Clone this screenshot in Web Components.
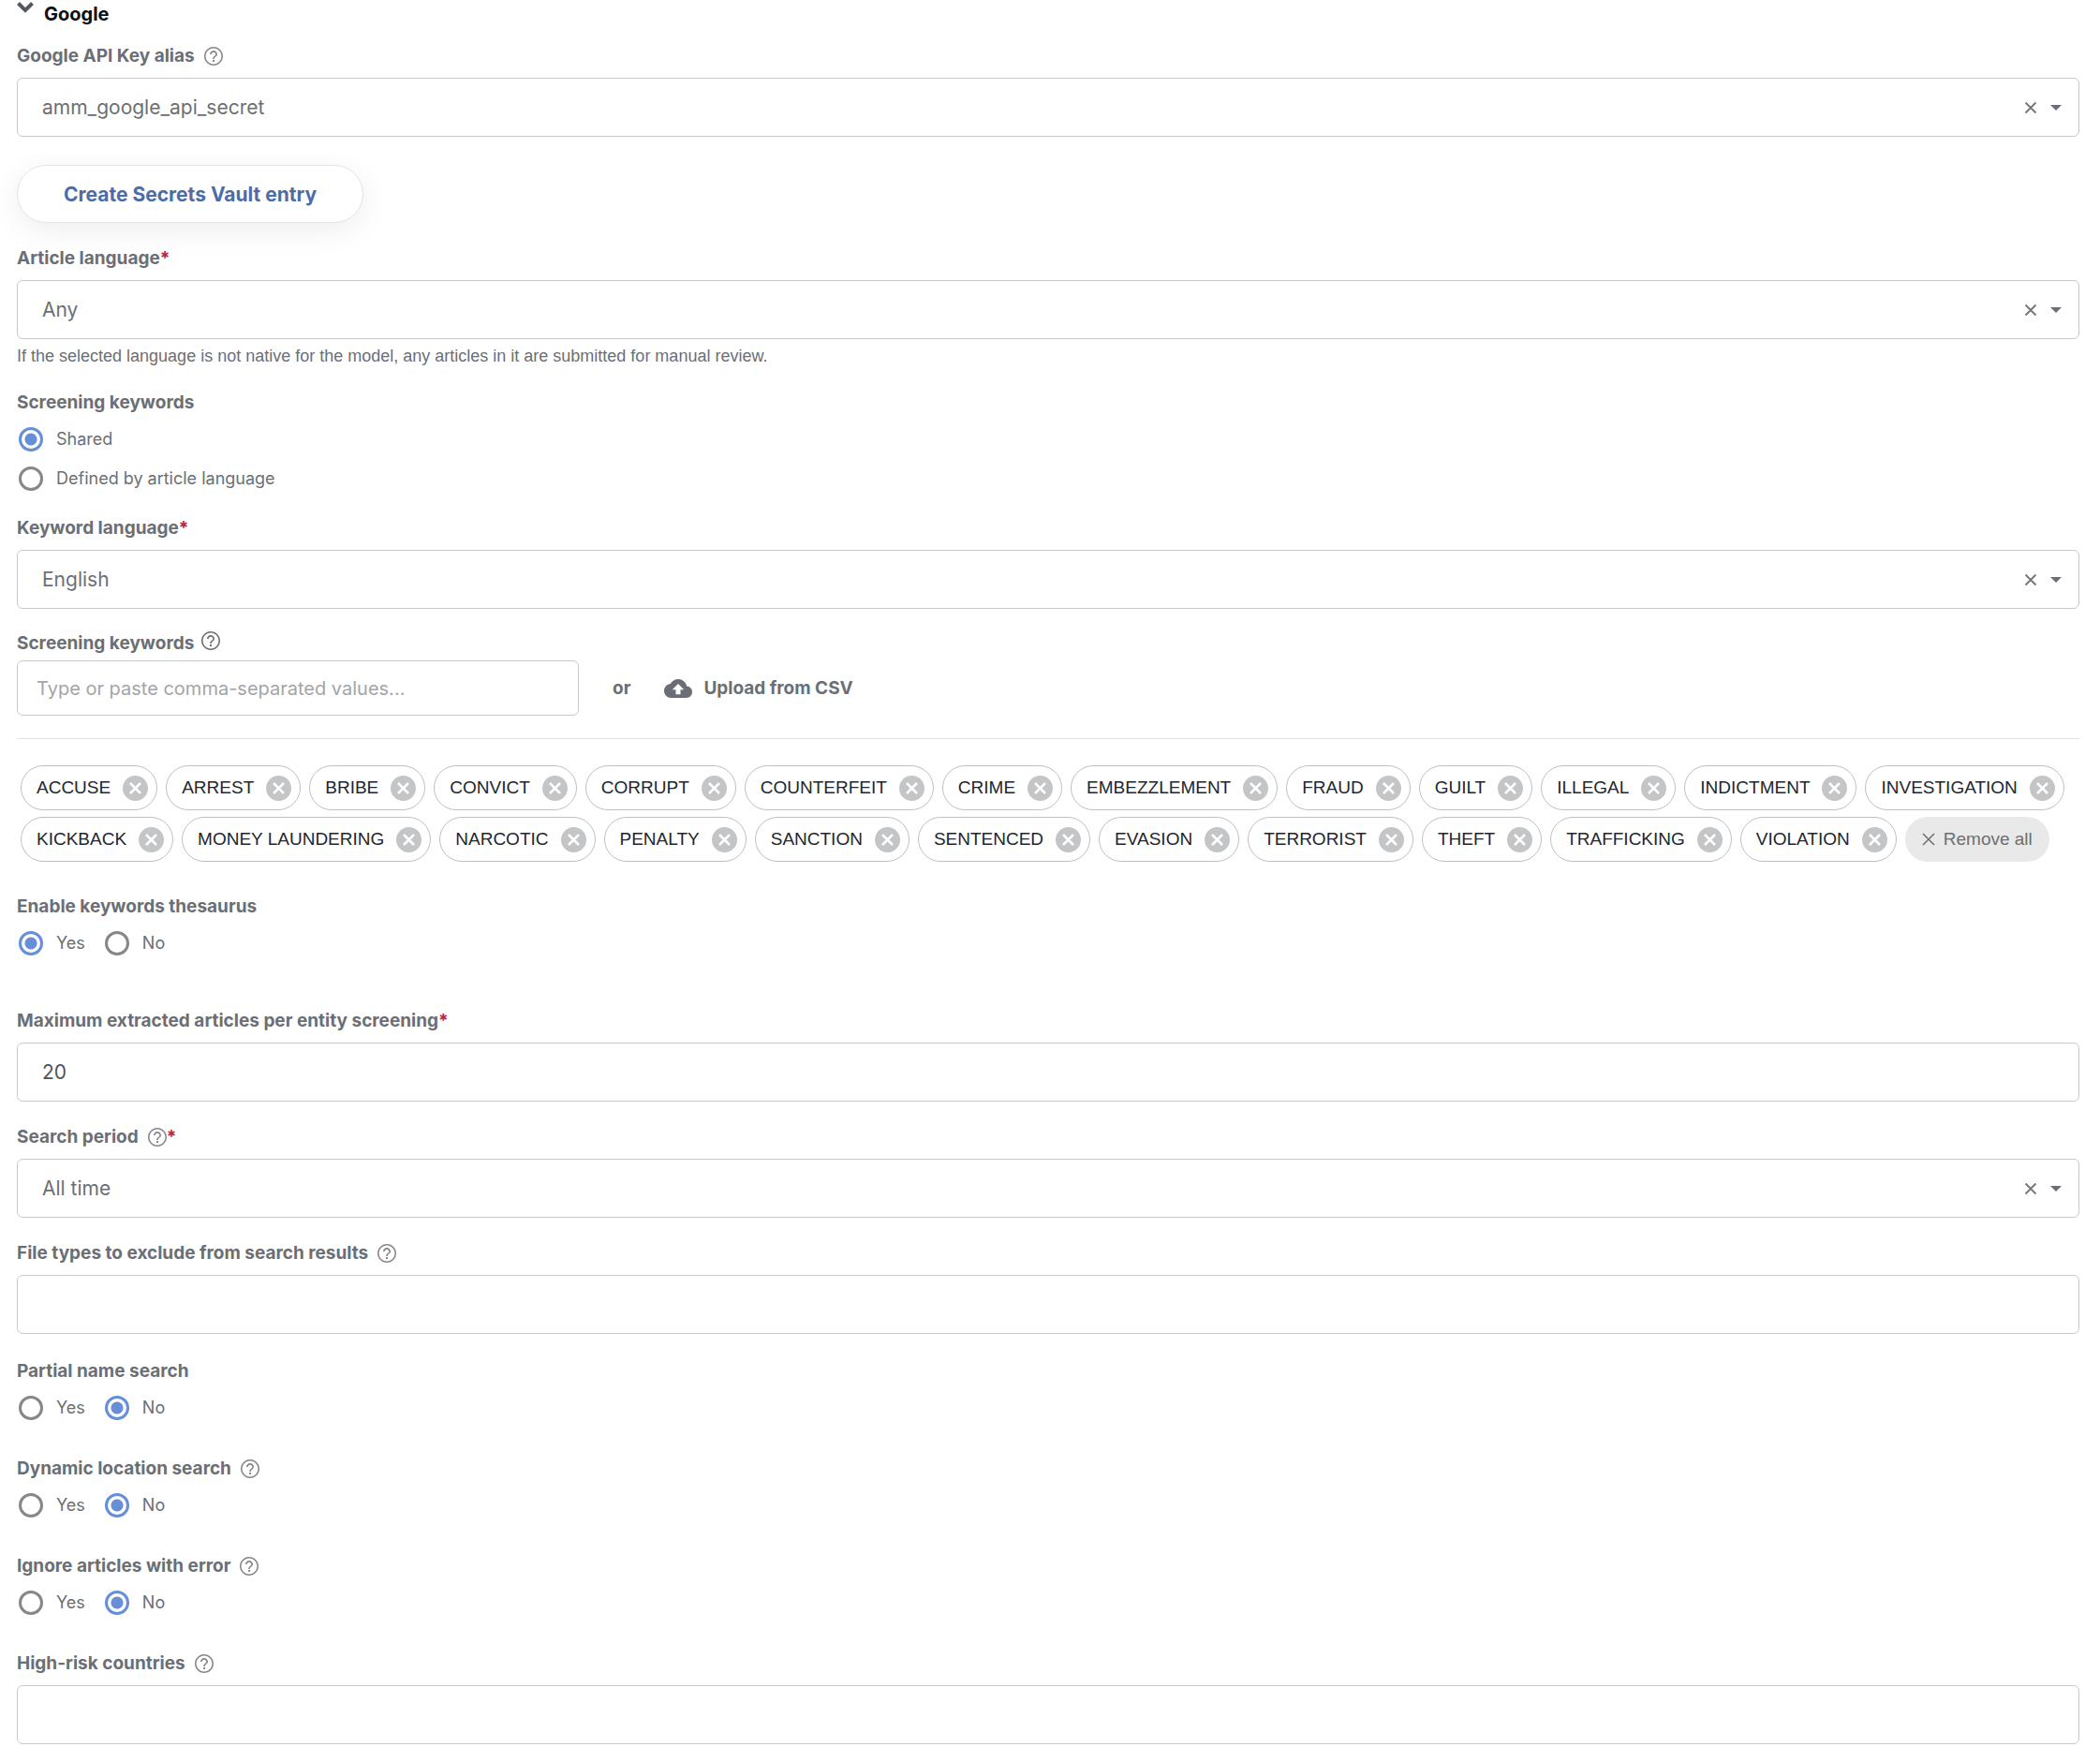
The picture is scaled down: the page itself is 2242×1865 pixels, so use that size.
<!DOCTYPE html>
<html lang="en">
<head>
<meta charset="utf-8">
<meta name="viewport" content="width=device-width, initial-scale=1">
<title>Google</title>
<style>
  body {
    margin: 0;
    background: #fff;
    color: #6b6f75;
    font-family: Inter, "Liberation Sans", sans-serif;
    font-size: 18px;
    line-height: 24px;
  }
</style>
</head>
<body>
<google-settings></google-settings>

<script>
const baseStyles = /*html*/ `
  <style>
    :host { display: block; }
    * { box-sizing: border-box; }
    button, input, select { font-family: inherit; color: inherit; margin: 0; }
    button { border: 0; padding: 0; background: none; cursor: pointer; }
    svg { display: block; }
    .label {
      display: flex;
      align-items: center;
      height: 24px;
      margin-bottom: 11px;
      font-size: 19px;
      font-weight: 700;
      white-space: nowrap;
    }
    .label help-icon { margin-left: 10px; }
    .required { color: #b9253a; }
    .box {
      display: flex;
      align-items: center;
      width: 100%;
      height: 63px;
      border: 1px solid #c8c9cb;
      border-radius: 6px;
      background: #fff;
    }
    .box:focus-within { border-color: #668fd8; }
  </style>
`;

// label + help icon + red star, shared by all the fields
const labelContent = (el) => `
  <span>${el.getAttribute('label')}</span>
  ${el.hasAttribute('help') ? '<help-icon></help-icon>' : ''}
  ${el.hasAttribute('required') ? '<span class="required">*</span>' : ''}
`;

class HelpIcon extends HTMLElement {
  constructor() {
    super();
    this.attachShadow({ mode: 'open' });
    this.shadowRoot.innerHTML = /*html*/ `
      <style>
        :host { display: block; color: #85878b; }
        svg { display: block; }
      </style>
      <svg width="20" height="20" viewBox="2 2 20 20" fill="currentColor" aria-hidden="true">
        <path d="M11 18h2v-2h-2v2zm1-16C6.480 2 2 6.480 2 12s4.480 10 10 10 10-4.480 10-10S17.520 2 12 2zm0 18.400c-4.630 0-8.400-3.770-8.400-8.400S7.370 3.600 12 3.600s8.400 3.770 8.400 8.400-3.770 8.400-8.400 8.400zm0-14.400c-2.210 0-4 1.790-4 4h1.700c0-1.270 1.030-2.300 2.300-2.300s2.300 1.030 2.300 2.300c0 2-3.150 1.750-3.150 5h1.700c0-2.250 3.150-2.500 3.150-5 0-2.210-1.790-4-4-4z"/>
      </svg>
    `;
  }
}
customElements.define('help-icon', HelpIcon);

class TextField extends HTMLElement {
  connectedCallback() {
    this.attachShadow({ mode: 'open' });
    this.shadowRoot.innerHTML = /*html*/ `
      ${baseStyles}
      <style>
        input {
          padding: 0 26px;
          font-size: 21px;
          color: #505359;
          outline: none;
        }
      </style>
      <label class="label" for="control">${labelContent(this)}</label>
      <input class="box" id="control" type="text" value="${this.getAttribute('value') || ''}">
    `;
  }
}
customElements.define('text-field', TextField);

class SelectField extends HTMLElement {
  connectedCallback() {
    const value = this.getAttribute('value');
    this.attachShadow({ mode: 'open' });
    this.shadowRoot.innerHTML = /*html*/ `
      ${baseStyles}
      <style>
        .box { padding-right: 18px; }
        select {
          flex: 1;
          height: 100%;
          padding: 0 26px;
          border: 0;
          background: none;
          appearance: none;
          font-size: 21px;
          outline: none;
        }
        .clear { padding: 4px; margin-right: 10px; }
        .note {
          margin: 6px 0 0;
          font-family: "Liberation Sans", Arial, sans-serif;
          font-size: 18px;
        }
      </style>
      <label class="label" for="control">${labelContent(this)}</label>
      <div class="box">
        <select id="control"><option value="">&nbsp;</option><option selected>${value}</option></select>
        <button class="clear" type="button" aria-label="Clear">
          <svg width="14" height="14" viewBox="0 0 14 14" fill="none" stroke="#77797d" stroke-width="2"><path d="M1.500 1.500l11 11M12.500 1.500l-11 11"/></svg>
        </button>
        <svg width="12" height="6" viewBox="0 0 12 6" fill="#6b6f75" aria-hidden="true"><path d="M0 0h12L6 6z"/></svg>
      </div>
      ${this.hasAttribute('note') ? `<p class="note">${this.getAttribute('note')}</p>` : ''}
    `;
    this.shadowRoot.querySelector('.clear').addEventListener('click', () => {
      this.shadowRoot.querySelector('select').value = '';
    });
  }
}
customElements.define('select-field', SelectField);

class RadioField extends HTMLElement {
  connectedCallback() {
    const checked = this.getAttribute('value');
    const options = this.getAttribute('options').split(',');
    this.attachShadow({ mode: 'open' });
    this.shadowRoot.innerHTML = /*html*/ `
      ${baseStyles}
      <style>
        .label { margin-bottom: 14px; }
        .options { display: flex; gap: 21px; margin-left: 2px; }
        :host([stacked]) .options { flex-direction: column; gap: 16px; }
        .option { display: flex; align-items: center; gap: 14px; height: 26px; }
        input {
          appearance: none;
          width: 26px;
          height: 26px;
          border: 3px solid #85878b;
          border-radius: 50%;
        }
        input:checked {
          border-color: #668fd8;
          background: radial-gradient(circle, #668fd8 6px, #fff 7px);
        }
      </style>
      <div class="label" id="title">${labelContent(this)}</div>
      <div class="options" role="radiogroup" aria-labelledby="title">
        ${options.map((option) => `
          <label class="option">
            <input type="radio" name="choice" ${option === checked ? 'checked' : ''}>
            <span>${option}</span>
          </label>
        `).join('')}
      </div>
    `;
  }
}
customElements.define('radio-field', RadioField);

class KeywordChip extends HTMLElement {
  constructor() {
    super();
    this.attachShadow({ mode: 'open' });
    this.shadowRoot.innerHTML = /*html*/ `
      <style>
        :host {
          box-sizing: border-box;
          display: flex;
          align-items: center;
          gap: 13px;
          height: 48px;
          padding: 0 9px 0 16px;
          border: 1px solid #bfc0c3;
          border-radius: 24px;
          color: #22262e;
          white-space: nowrap;
        }
        button { border: 0; padding: 0; background: none; cursor: pointer; }
        svg { display: block; }
      </style>
      <slot></slot>
      <button type="button" aria-label="Remove">
        <svg width="27" height="27" viewBox="0 0 27 27"><circle cx="13.500" cy="13.500" r="13.500" fill="#c4c5c7"/><path d="M8 8l11 11M19 8L8 19" stroke="#fff" stroke-width="2.500"/></svg>
      </button>
    `;
    this.shadowRoot.querySelector('button').addEventListener('click', () => this.remove());
  }
}
customElements.define('keyword-chip', KeywordChip);

class KeywordEditor extends HTMLElement {
  connectedCallback() {
    const keywords = this.getAttribute('keywords').split(',');
    this.attachShadow({ mode: 'open' });
    this.shadowRoot.innerHTML = /*html*/ `
      ${baseStyles}
      <style>
        .label { align-items: flex-start; margin-bottom: 7px; line-height: 26px; }
        .label help-icon { margin-left: 8px; color: #6b6f75; }
        .entry {
          display: flex;
          align-items: center;
          padding-bottom: 24px;
          border-bottom: 1px solid #dfe0e1;
          font-size: 19px;
          font-weight: 700;
        }
        input.box { width: 600px; height: 59px; padding: 0 20px; font-size: 20px; outline: none; }
        input::placeholder { color: #a3a5a8; opacity: 1; }
        .or { margin: 0 36px; }
        .upload { display: flex; align-items: center; gap: 12px; font-size: 19px; font-weight: 700; }
        .chips {
          display: flex;
          flex-wrap: wrap;
          gap: 7px 9px;
          padding: 28px 4px 0;
          font-family: "Liberation Sans", Arial, sans-serif;
          font-size: 19px;
        }
        .remove {
          display: flex;
          align-items: center;
          gap: 9px;
          height: 48px;
          padding: 0 18px;
          border-radius: 24px;
          background: #e9e9ea;
          font-size: 19px;
        }
      </style>
      <label class="label" for="control">${labelContent(this)}</label>
      <div class="entry">
        <input class="box" id="control" type="text" placeholder="Type or paste comma-separated values...">
        <span class="or">or</span>
        <button class="upload" type="button">
          <svg width="30" height="20" viewBox="0 4 24 16" fill="#6b6f75" aria-hidden="true"><path d="M19.350 10.040C18.670 6.590 15.640 4 12 4 9.110 4 6.600 5.640 5.350 8.040 2.340 8.360 0 10.910 0 14c0 3.310 2.690 6 6 6h13c2.760 0 5-2.240 5-5 0-2.640-2.050-4.780-4.650-4.960zM14 13v4h-4v-4H7l5-5 5 5h-3z"/></svg>
          Upload from CSV
        </button>
      </div>
      <div class="chips">
        ${keywords.map((word) => `<keyword-chip>${word}</keyword-chip>`).join('')}
        <button class="remove" type="button">
          <svg width="14" height="14" viewBox="0 0 14 14" fill="none" stroke="#6b6f75" stroke-width="1.500"><path d="M1 1l12 12M13 1L1 13"/></svg>
          Remove all
        </button>
      </div>
    `;
    this.shadowRoot.querySelector('.remove').addEventListener('click', () => {
      this.shadowRoot.querySelectorAll('keyword-chip').forEach((chip) => chip.remove());
    });
  }
}
customElements.define('keyword-editor', KeywordEditor);

class PillButton extends HTMLElement {
  constructor() {
    super();
    this.attachShadow({ mode: 'open' });
    this.shadowRoot.innerHTML = /*html*/ `
      <style>
        :host { display: flex; }
        button {
          height: 62px;
          padding: 0 49px;
          border: 1px solid #e3e4e6;
          border-radius: 31px;
          background: #fff;
          box-shadow: 0 8px 32px rgba(0, 0, 0, 0.07);
          color: #4a6da9;
          font-family: inherit;
          font-size: 21px;
          font-weight: 700;
          cursor: pointer;
        }
      </style>
      <button type="button"><slot></slot></button>
    `;
  }
}
customElements.define('pill-button', PillButton);

class GoogleSettings extends HTMLElement {
  constructor() {
    super();
    this.attachShadow({ mode: 'open' });
    this.shadowRoot.innerHTML = /*html*/ `
      <style>
        :host { display: block; padding: 0 22px 2px 18px; }
        h2 {
          display: flex;
          gap: 11px;
          margin: 0 0 18px;
          color: #0b0e14;
          font-size: 20px;
          line-height: 30px;
          font-weight: 700;
        }
        h2 svg { display: block; margin-top: 2px; }
        .group { display: flex; flex-direction: column; gap: 26px; }
        .gap-top { margin-top: 4px; }
        .wide { margin-top: 58px; }
        .loose { display: flex; flex-direction: column; gap: 40px; margin-top: 2px; }
        radio-field + select-field { margin-top: 2px; }
        keyword-editor { margin: 24px 0 36px; }
      </style>
      <h2>
        <svg width="18" height="12" viewBox="0 0 18 12" fill="none" stroke="#55585f" stroke-width="4" aria-hidden="true"><path d="M1.500 1.500L9 9l7.500-7.500"/></svg>
        Google
      </h2>
      <div class="group">
        <select-field label="Google API Key alias" help value="amm_google_api_secret"></select-field>
        <pill-button class="gap-top">Create Secrets Vault entry</pill-button>
        <select-field label="Article language" required value="Any" note="If the selected language is not native for the model, any articles in it are submitted for manual review."></select-field>
        <radio-field stacked label="Screening keywords" options="Shared,Defined by article language" value="Shared"></radio-field>
        <select-field label="Keyword language" required value="English"></select-field>
      </div>
      <keyword-editor label="Screening keywords" help keywords="ACCUSE,ARREST,BRIBE,CONVICT,CORRUPT,COUNTERFEIT,CRIME,EMBEZZLEMENT,FRAUD,GUILT,ILLEGAL,INDICTMENT,INVESTIGATION,KICKBACK,MONEY LAUNDERING,NARCOTIC,PENALTY,SANCTION,SENTENCED,EVASION,TERRORIST,THEFT,TRAFFICKING,VIOLATION"></keyword-editor>
      <radio-field label="Enable keywords thesaurus" options="Yes,No" value="Yes"></radio-field>
      <div class="group wide">
        <text-field label="Maximum extracted articles per entity screening" required value="20"></text-field>
        <select-field label="Search period" help required value="All time"></select-field>
        <text-field label="File types to exclude from search results" help></text-field>
        <div class="loose">
          <radio-field label="Partial name search" options="Yes,No" value="No"></radio-field>
          <radio-field label="Dynamic location search" help options="Yes,No" value="No"></radio-field>
          <radio-field label="Ignore articles with error" help options="Yes,No" value="No"></radio-field>
          <text-field label="High-risk countries" help></text-field>
        </div>
      </div>
    `;
  }
}
customElements.define('google-settings', GoogleSettings);
</script>
</body>
</html>
